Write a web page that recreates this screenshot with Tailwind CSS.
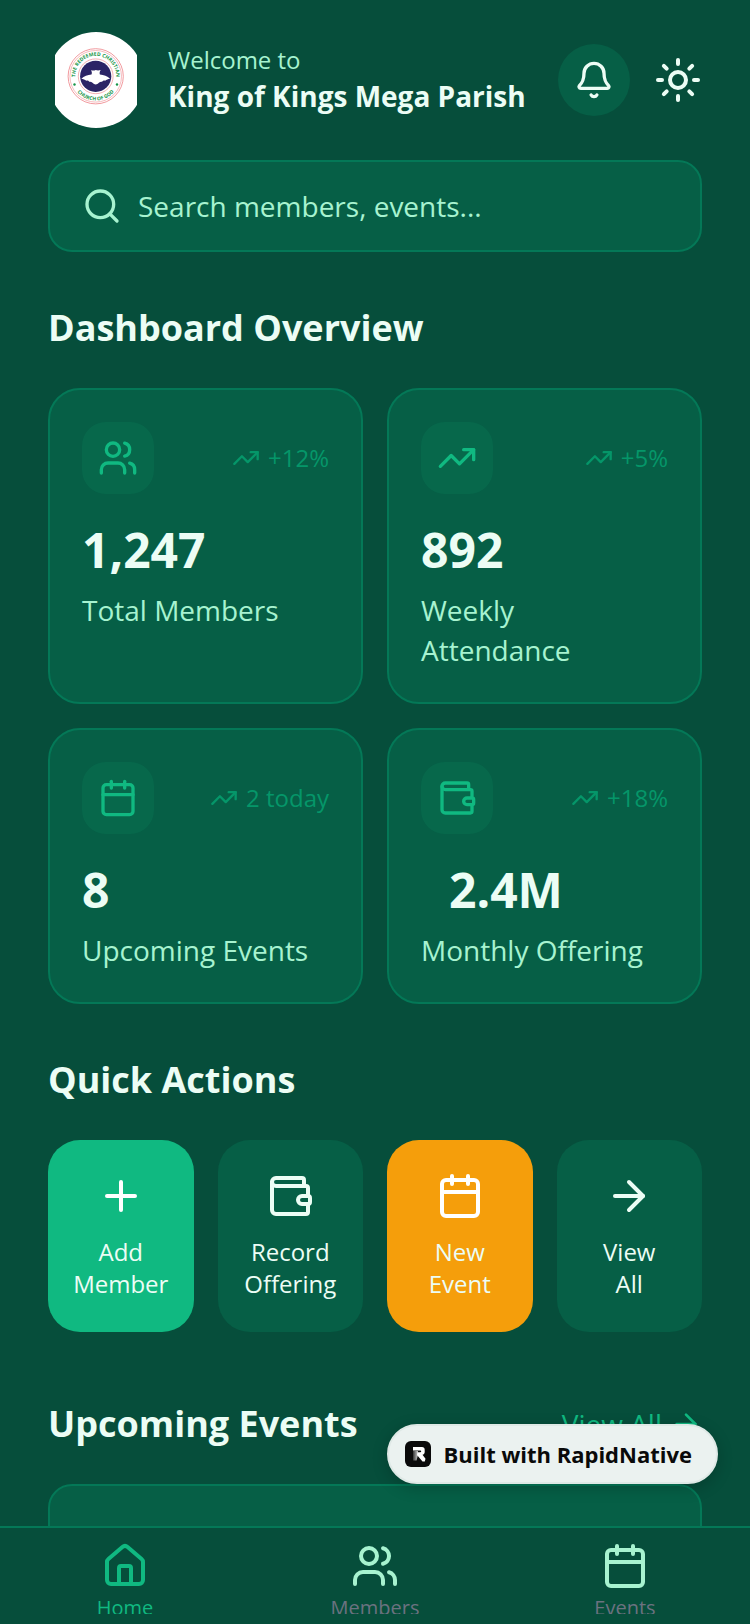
<!DOCTYPE html>
<html lang="en">
<head>
<meta charset="utf-8">
<meta name="viewport" content="width=device-width, initial-scale=1">
<title>King of Kings Mega Parish</title>
<script src="https://cdn.jsdelivr.net/npm/@tailwindcss/browser@4"></script>
</head>
<body class="relative flex h-screen flex-col overflow-hidden bg-[#064e3b] font-['Open_Sans',sans-serif] text-[#ecfdf5]">

<svg class="hidden" aria-hidden="true">
  <symbol id="users" viewBox="0 0 24 24"><path d="M16 21v-2a4 4 0 0 0-4-4H6a4 4 0 0 0-4 4v2"/><circle cx="9" cy="7" r="4"/><path d="M22 21v-2a4 4 0 0 0-3-3.87"/><path d="M16 3.13a4 4 0 0 1 0 7.75"/></symbol>
  <symbol id="trend" viewBox="0 0 24 24"><path d="M22 7 13.5 15.5 8.5 10.5 2 17"/><path d="M16 7h6v6"/></symbol>
  <symbol id="calendar" viewBox="0 0 24 24"><path d="M8 2v4"/><path d="M16 2v4"/><rect width="18" height="18" x="3" y="4" rx="2"/><path d="M3 10h18"/></symbol>
  <symbol id="wallet" viewBox="0 0 24 24"><path d="M19 7V4a1 1 0 0 0-1-1H5a2 2 0 0 0 0 4h15a1 1 0 0 1 1 1v4h-3a2 2 0 0 0 0 4h3a1 1 0 0 0 1-1v-2a1 1 0 0 0-1-1"/><path d="M3 5v14a2 2 0 0 0 2 2h15a1 1 0 0 0 1-1v-4"/></symbol>
  <symbol id="arrow" viewBox="0 0 24 24"><path d="M5 12h14"/><path d="m12 5 7 7-7 7"/></symbol>
  <symbol id="plus" viewBox="0 0 24 24"><path d="M5 12h14"/><path d="M12 5v14"/></symbol>
  <symbol id="search" viewBox="0 0 24 24"><circle cx="11" cy="11" r="8"/><path d="m21 21-4.3-4.3"/></symbol>
  <symbol id="bell" viewBox="0 0 24 24"><path d="M10.268 21a2 2 0 0 0 3.464 0"/><path d="M3.262 15.326A1 1 0 0 0 4 17h16a1 1 0 0 0 .74-1.673C19.41 13.956 18 12.499 18 8A6 6 0 0 0 6 8c0 4.499-1.411 5.956-2.738 7.326"/></symbol>
  <symbol id="sun" viewBox="0 0 24 24"><circle cx="12" cy="12" r="4"/><path d="M12 2v2"/><path d="M12 20v2"/><path d="m4.93 4.93 1.41 1.41"/><path d="m17.66 17.66 1.41 1.41"/><path d="M2 12h2"/><path d="M20 12h2"/><path d="m6.34 17.66-1.41 1.41"/><path d="m19.07 4.93-1.41 1.41"/></symbol>
  <symbol id="home" viewBox="0 0 24 24"><path d="M15 21v-8a1 1 0 0 0-1-1h-4a1 1 0 0 0-1 1v8"/><path d="M3 10a2 2 0 0 1 .709-1.528l7-5.999a2 2 0 0 1 2.582 0l7 5.999A2 2 0 0 1 21 10v9a2 2 0 0 1-2 2H5a2 2 0 0 1-2-2z"/></symbol>
</svg>

<main class="min-h-0 flex-1 overflow-y-auto px-12 pt-8 [scrollbar-width:none]">
  <header class="flex items-center">
    <div class="flex size-24 shrink-0 justify-center overflow-hidden rounded-full">
      <svg class="h-24 w-[82px] bg-white" viewBox="0 0 82 96" role="img" aria-label="The Redeemed Christian Church of God">
        <defs>
          <path id="arc-full" d="M26.200 58.800a20.500 20.500 0 1 1 29 0"/>
          <path id="arc-bottom" d="M17.200 50a24.200 24.200 0 0 0 47 0"/>
        </defs>
        <g fill="none" stroke="#ef8f94">
          <circle cx="40.7" cy="44.3" r="27.6" stroke-width=".9"/>
          <circle cx="40.7" cy="44.3" r="25.8" stroke-width=".6"/>
          <circle cx="40.7" cy="44.3" r="17.4" stroke-width=".7"/>
        </g>
        <circle cx="40.7" cy="44.3" r="15.6" fill="#2b2466"/>
        <path fill="#fff" d="M36 38.2c2 .5 3.300.4 4.700-.2 1.600.6 3 .6 5 0-1.200 1.800-1.300 3.200-.8 4.500 3.800.3 7.500 1.400 10.200 4.300-2.200 0-3.500 1-5 2-1.200-.6-2.200-.2-3 1-1.300-.4-2.200.2-3.200 1-1.200.9-2 1.700-3.200 1.800-1.200-.1-2-.9-3.200-1.800-1-.8-1.900-1.400-3.200-1-.8-1.200-1.800-1.600-3-1-1.500-1-2.800-2-5-2 2.700-2.900 6.400-4 10.200-4.300.6-1.300.5-2.700-.5-4.300z"/>
        <g fill="#159447" class="font-['Open_Sans',sans-serif] text-[5px] font-bold">
          <text text-anchor="middle"><textPath href="#arc-full" startOffset="50%">THE REDEEMED CHRISTIAN</textPath></text>
          <text text-anchor="middle"><textPath href="#arc-bottom" startOffset="50%">CHURCH OF GOD</textPath></text>
        </g>
        <g fill="#159447"><circle cx="19.500" cy="52.500" r="1.200"/><circle cx="62" cy="52.500" r="1.200"/></g>
      </svg>
    </div>
    <div class="ml-6 min-w-0 flex-1">
      <p class="text-2xl leading-8 text-[#a7f3d0]">Welcome to</p>
      <h1 class="text-[28px] leading-10 font-bold whitespace-nowrap">King of Kings Mega Parish</h1>
    </div>
    <button type="button" aria-label="Notifications" class="flex size-[72px] shrink-0 items-center justify-center rounded-full bg-[#065f46]">
      <svg class="size-10 fill-none stroke-current stroke-2 [stroke-linecap:round] [stroke-linejoin:round]"><use href="#bell"/></svg>
    </button>
    <button type="button" aria-label="Toggle theme" class="ml-6 shrink-0">
      <svg class="size-12 fill-none stroke-current stroke-2 [stroke-linecap:round] [stroke-linejoin:round]"><use href="#sun"/></svg>
    </button>
  </header>

  <label class="mt-8 flex h-23 items-center gap-4 rounded-3xl border-2 border-[#047857] bg-[#065f46] px-8">
    <svg class="size-10 shrink-0 fill-none stroke-[#a7f3d0] stroke-2 [stroke-linecap:round] [stroke-linejoin:round]"><use href="#search"/></svg>
    <input type="search" aria-label="Search" placeholder="Search members, events..." class="w-full min-w-0 bg-transparent text-[28px] outline-none placeholder:text-[#a7f3d0]">
  </label>

  <section class="mt-12">
    <h2 class="text-4xl leading-14 font-bold">Dashboard Overview</h2>
    <div class="mt-8 grid grid-cols-2 gap-6">
      <article class="rounded-4xl border-2 border-[#047857] bg-[#065f46] p-8">
        <div class="flex items-center justify-between">
          <div class="flex size-[72px] items-center justify-center rounded-3xl bg-[#10b981]/10">
            <svg class="size-10 fill-none stroke-[#10b981] stroke-2 [stroke-linecap:round] [stroke-linejoin:round]"><use href="#users"/></svg>
          </div>
          <div class="flex items-center gap-2 text-2xl leading-8 text-[#059669]">
            <svg class="size-7 fill-none stroke-current stroke-2 [stroke-linecap:round] [stroke-linejoin:round]"><use href="#trend"/></svg>+12%
          </div>
        </div>
        <p class="mt-6 text-5xl leading-16 font-bold">1,247</p>
        <p class="mt-2 text-[28px] leading-10 text-[#a7f3d0]">Total Members</p>
      </article>
      <article class="rounded-4xl border-2 border-[#047857] bg-[#065f46] p-8">
        <div class="flex items-center justify-between">
          <div class="flex size-[72px] items-center justify-center rounded-3xl bg-[#10b981]/10">
            <svg class="size-10 fill-none stroke-[#10b981] stroke-2 [stroke-linecap:round] [stroke-linejoin:round]"><use href="#trend"/></svg>
          </div>
          <div class="flex items-center gap-2 text-2xl leading-8 text-[#059669]">
            <svg class="size-7 fill-none stroke-current stroke-2 [stroke-linecap:round] [stroke-linejoin:round]"><use href="#trend"/></svg>+5%
          </div>
        </div>
        <p class="mt-6 text-5xl leading-16 font-bold">892</p>
        <p class="mt-2 text-[28px] leading-10 text-[#a7f3d0]">Weekly<br>Attendance</p>
      </article>
      <article class="rounded-4xl border-2 border-[#047857] bg-[#065f46] p-8">
        <div class="flex items-center justify-between">
          <div class="flex size-[72px] items-center justify-center rounded-3xl bg-[#10b981]/10">
            <svg class="size-10 fill-none stroke-[#10b981] stroke-2 [stroke-linecap:round] [stroke-linejoin:round]"><use href="#calendar"/></svg>
          </div>
          <div class="flex items-center gap-2 text-2xl leading-8 text-[#059669]">
            <svg class="size-7 fill-none stroke-current stroke-2 [stroke-linecap:round] [stroke-linejoin:round]"><use href="#trend"/></svg>2 today
          </div>
        </div>
        <p class="mt-6 text-5xl leading-16 font-bold">8</p>
        <p class="mt-2 text-[28px] leading-10 text-[#a7f3d0]">Upcoming Events</p>
      </article>
      <article class="rounded-4xl border-2 border-[#047857] bg-[#065f46] p-8">
        <div class="flex items-center justify-between">
          <div class="flex size-[72px] items-center justify-center rounded-3xl bg-[#10b981]/10">
            <svg class="size-10 fill-none stroke-[#10b981] stroke-2 [stroke-linecap:round] [stroke-linejoin:round]"><use href="#wallet"/></svg>
          </div>
          <div class="flex items-center gap-2 text-2xl leading-8 text-[#059669]">
            <svg class="size-7 fill-none stroke-current stroke-2 [stroke-linecap:round] [stroke-linejoin:round]"><use href="#trend"/></svg>+18%
          </div>
        </div>
        <p class="mt-6 pl-7 text-5xl leading-16 font-bold">2.4M</p>
        <p class="mt-2 text-[28px] leading-10 text-[#a7f3d0]">Monthly Offering</p>
      </article>
    </div>
  </section>

  <section class="mt-12">
    <h2 class="text-4xl leading-14 font-bold">Quick Actions</h2>
    <div class="mt-8 grid grid-cols-4 gap-6 text-2xl leading-8">
      <button type="button" class="flex flex-col items-center gap-4 rounded-4xl bg-[#10b981] py-8">
        <svg class="size-12 fill-none stroke-white stroke-2 [stroke-linecap:round] [stroke-linejoin:round]"><use href="#plus"/></svg>
        <span>Add<br>Member</span>
      </button>
      <button type="button" class="flex flex-col items-center gap-4 rounded-4xl bg-[#065f46] py-8">
        <svg class="size-12 fill-none stroke-current stroke-2 [stroke-linecap:round] [stroke-linejoin:round]"><use href="#wallet"/></svg>
        <span>Record<br>Offering</span>
      </button>
      <button type="button" class="flex flex-col items-center gap-4 rounded-4xl bg-[#f59e0b] py-8">
        <svg class="size-12 fill-none stroke-white stroke-2 [stroke-linecap:round] [stroke-linejoin:round]"><use href="#calendar"/></svg>
        <span>New<br>Event</span>
      </button>
      <button type="button" class="flex flex-col items-center gap-4 rounded-4xl bg-[#065f46] py-8">
        <svg class="size-12 fill-none stroke-current stroke-2 [stroke-linecap:round] [stroke-linejoin:round]"><use href="#arrow"/></svg>
        <span>View<br>All</span>
      </button>
    </div>
  </section>

  <section class="mt-16">
    <div class="flex items-center justify-between">
      <h2 class="text-4xl leading-14 font-bold">Upcoming Events</h2>
      <a href="#" class="flex items-center gap-2 text-[28px] leading-10 text-[#10b981]">View All
        <svg class="size-8 fill-none stroke-current stroke-2 [stroke-linecap:round] [stroke-linejoin:round]"><use href="#arrow"/></svg>
      </a>
    </div>
    <article class="mt-8 h-40 rounded-3xl border-2 border-[#047857] bg-[#065f46]"></article>
  </section>
</main>

<nav class="shrink-0 border-t-2 border-[#047857] bg-[#064e3b] pt-[14px] pb-[10px] text-xl leading-7">
  <div class="grid h-18 grid-cols-3 overflow-hidden">
    <a href="#" aria-current="page" class="flex flex-col items-center gap-1 text-[#10b981]">
      <svg class="size-12 shrink-0 fill-none stroke-current stroke-2 [stroke-linecap:round] [stroke-linejoin:round]"><use href="#home"/></svg>Home
    </a>
    <a href="#" class="flex flex-col items-center gap-1 text-[#6b7280]">
      <svg class="size-12 shrink-0 fill-none stroke-[#a7f3d0] stroke-2 [stroke-linecap:round] [stroke-linejoin:round]"><use href="#users"/></svg>Members
    </a>
    <a href="#" class="flex flex-col items-center gap-1 text-[#6b7280]">
      <svg class="size-12 shrink-0 fill-none stroke-[#a7f3d0] stroke-2 [stroke-linecap:round] [stroke-linejoin:round]"><use href="#calendar"/></svg>Events
    </a>
  </div>
</nav>

<a href="#" class="absolute right-8 bottom-[140px] flex h-15 items-center gap-3 rounded-full border-2 border-[#dfe9e6] bg-[#ebf2f0] pr-6 pl-4 text-[22px] leading-7 font-bold text-[#0a0a0a] shadow-[0_4px_16px_rgba(0,0,0,0.2)]">
  <svg class="size-[26px]" viewBox="0 0 26 26" aria-hidden="true">
    <defs><linearGradient id="fade" x1="0" x2="1" y1="0" y2="0"><stop stop-color="#333"/><stop offset="1" stop-color="#ccc"/></linearGradient></defs>
    <rect width="26" height="26" rx="6" fill="#0a0a0a"/>
    <path d="M8 10h5v4l-1.500 5.500H8z" fill="url(#fade)"/>
    <path d="M8 6h9c1.700 0 2.700 1 2.700 2.700v2.200c0 1.500-.8 2.500-2.200 2.900l3 4-.7 2.700h-2.300L12 14l.6-2.800h2.600c.7 0 1-.3 1-.8s-.3-.8-1-.8H8z" fill="#fff"/>
  </svg>
  Built with RapidNative
</a>
</body>
</html>
